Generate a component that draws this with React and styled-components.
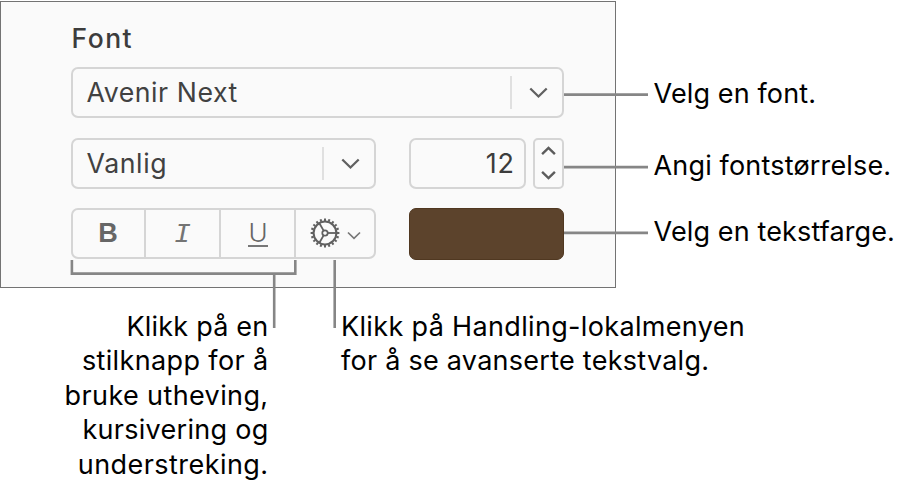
import React from 'react';
import styled, { createGlobalStyle } from 'styled-components';

const App = () => {
    return(
        <Page>
            <GlobalStyle />
            <TopRow>
                <Panel>
                    <Heading>Font</Heading>
                    <Combo>
                        <ComboText $spacing={0.55}>Avenir Next</ComboText>
                        <Arrow><Chevron /></Arrow>
                    </Combo>
                    <ControlRow>
                        <Combo $width={305}>
                            <ComboText $spacing={0.6}>Vanlig</ComboText>
                            <Arrow><Chevron /></Arrow>
                        </Combo>
                        <SizeGroup>
                            <SizeField>12</SizeField>
                            <Stepper>
                                <StepIcon viewBox="0 0 15 10"><path d="M1.1 8.2 L7.5 2 L13.9 8.2" /></StepIcon>
                                <StepIcon viewBox="0 0 15 10"><path d="M1.1 1.8 L7.5 8 L13.9 1.8" /></StepIcon>
                            </Stepper>
                        </SizeGroup>
                    </ControlRow>
                    <ControlRow>
                        <StyleGroup>
                            <StyleButton><BoldMark>B</BoldMark></StyleButton>
                            <StyleButton><ItalicMark>I</ItalicMark></StyleButton>
                            <StyleButton><UnderlineMark>U</UnderlineMark></StyleButton>
                            <ActionButton>
                                <Gear />
                                <SmallArrow viewBox="0 0 14 9"><path d="M1 1.5 L7 7.3 L13 1.5" /></SmallArrow>
                            </ActionButton>
                        </StyleGroup>
                        <ColorWell />
                    </ControlRow>
                </Panel>
                <Labels>
                    <Label $spacing={0.13}>Velg en font.</Label>
                    <Label $spacing={0.17}>Angi fontstørrelse.</Label>
                    <Label $spacing={0.13}>Velg en tekstfarge.</Label>
                </Labels>
            </TopRow>
            <BottomRow>
                <Caption $width={268.5} $align="right">
                    <Line $spacing={0.22}>Klikk på en</Line>
                    <Line $spacing={0.37}>stilknapp for å</Line>
                    <Line $spacing={0.38}>bruke utheving,</Line>
                    <Line $spacing={0.28}>kursivering og</Line>
                    <Line $spacing={0.44}>understreking.</Line>
                </Caption>
                <Caption $width={500} $align="left">
                    <Line $spacing={0.34}>Klikk på Handling-lokalmenyen</Line>
                    <Line $spacing={0.26}>for å se avanserte tekstvalg.</Line>
                </Caption>
            </BottomRow>
            <Callouts viewBox="0 0 915 489">
                <path d="M564 94.6H648" />
                <path d="M564 167.1H648" />
                <path d="M564 232.9H648" />
                <path d="M71.9 260V273.6H295.3V260" />
                <path d="M274.2 273.6V328" />
                <path d="M334.7 260V328" />
            </Callouts>
        </Page>
    );
}

const Chevron = () => (
    <ChevronIcon viewBox="0 0 19 12">
        <path d="M1.3 1.5 L9.5 9.5 L17.7 1.5" />
    </ChevronIcon>
);

// ring with short teeth, small hub and three spokes
const Gear = () => {
    const teeth = [];
    for(let i = 0; i < 20; i++){
        teeth.push(i * 18);
    }
    return(
        <GearIcon viewBox="-15 -15 30 30">
            <circle r="11.4" strokeWidth="2" />
            <circle r="2.7" strokeWidth="1.8" />
            {teeth.map((a) => (
                <path key={a} d="M0 -12 V-14.4" strokeWidth="2" transform={`rotate(${a})`} />
            ))}
            {[90, 210, 330].map((a) => (
                <path key={a} d="M0 -3 V-11" strokeWidth="1.8" transform={`rotate(${a})`} />
            ))}
        </GearIcon>
    );
}

const GlobalStyle = createGlobalStyle`
    body {
        margin : 0;
        background-color : #ffffff;
        font-family : Inter, "Liberation Sans", sans-serif;
    }
    * {
        box-sizing : border-box;
    }
`;

const Page = styled.div`
    position : relative;
    width : 915px;
    height : 489px;
    overflow : hidden;
    padding-top : 1px;
`;

const TopRow = styled.div`
    display : flex;
`;

const Panel = styled.div`
    width : 616px;
    height : 287px;
    padding : 18px 51px 0 70px;
    border : 1px solid #737373;
    background-color : #fafafa;
`;

const Heading = styled.div`
    height : 47px;
    padding-left : 0.5px;
    line-height : 37px;
    font-size : 26.5px;
    font-weight : 500;
    letter-spacing : 1.5px;
    color : #3c3c3c;
`;

const ControlRow = styled.div`
    display : flex;
    justify-content : space-between;
    margin-top : 20px;

    & + & {
        margin-top : 19px;
    }
`;

const Combo = styled.div`
    display : flex;
    align-items : center;
    width : ${(props) => props.$width ? `${props.$width}px` : '100%'};
    height : 51px;
    border : 2px solid #d5d5d5;
    border-radius : 7px;
`;

const ComboText = styled.div`
    flex : 1;
    padding-left : 13.5px;
    font-size : 26.7px;
    line-height : 47px;
    letter-spacing : ${(props) => props.$spacing}px;
    color : #414141;
`;

const Arrow = styled.div`
    display : flex;
    align-items : center;
    width : 52px;
    height : 33px;
    padding-left : 17px;
    border-left : 2px solid #e0e0e0;
`;

const ChevronIcon = styled.svg`
    width : 19px;
    height : 12px;
    margin-top : 1px;
    fill : none;
    stroke : #606060;
    stroke-width : 2.3;
`;

const SizeGroup = styled.div`
    display : flex;
    justify-content : space-between;
    width : 155px;
`;

const SizeField = styled.div`
    width : 117px;
    height : 51px;
    padding-right : 9.5px;
    border : 2px solid #d5d5d5;
    border-radius : 7px;
    font-size : 27px;
    line-height : 47px;
    text-align : right;
    letter-spacing : 0.6px;
    color : #3c3c3c;
`;

const Stepper = styled.div`
    display : flex;
    flex-direction : column;
    align-items : center;
    justify-content : space-between;
    width : 31px;
    height : 51px;
    padding : 6px 0 7px;
    border : 2px solid #d5d5d5;
    border-radius : 5px;
`;

const StepIcon = styled.svg`
    width : 15px;
    height : 10px;
    fill : none;
    stroke : #5c5c5c;
    stroke-width : 2.4;
`;

const StyleGroup = styled.div`
    display : flex;
    width : 305px;
    height : 51px;
    border : 2px solid #d5d5d5;
    border-radius : 7px;
`;

const StyleButton = styled.div`
    display : flex;
    align-items : flex-start;
    justify-content : center;
    width : 75px;
    border-right : 2px solid #d5d5d5;
    color : #666666;

    &:first-child {
        width : 73px;
    }
`;

const BoldMark = styled.span`
    font-family : "Liberation Sans", sans-serif;
    font-size : 27px;
    font-weight : 700;
    line-height : 47px;
    margin-right : 1px;
`;

const ItalicMark = styled.span`
    font-family : "Liberation Mono", monospace;
    font-size : 28px;
    font-style : italic;
    line-height : 49px;
    color : #747474;
`;

const UnderlineMark = styled.span`
    height : 26px;
    margin : 11px 0 0 1px;
    border-bottom : 2px solid #777777;
    font-size : 26px;
    font-weight : 300;
    line-height : 24px;
`;

const ActionButton = styled.div`
    display : flex;
    flex : 1;
    align-items : center;
    padding : 0 0 1px 14px;
`;

const GearIcon = styled.svg`
    width : 30px;
    height : 30px;
    fill : none;
    stroke : #606060;
`;

const SmallArrow = styled.svg`
    width : 14px;
    height : 9px;
    margin : 4px 0 0 7px;
    fill : none;
    stroke : #777777;
    stroke-width : 1.7;
`;

const ColorWell = styled.div`
    width : 155px;
    height : 52px;
    border : 1px solid #503821;
    border-radius : 7px;
    background-color : #5c432c;
`;

const Labels = styled.div`
    padding-left : 37.5px;
`;

const Label = styled.div`
    font-size : 27px;
    line-height : 34px;
    letter-spacing : ${(props) => props.$spacing}px;
    white-space : nowrap;
    color : #000000;

    &:nth-child(1) {
        margin-top : 76px;
    }
    &:nth-child(2) {
        margin-top : 38px;
    }
    &:nth-child(3) {
        margin-top : 32px;
    }
`;

const BottomRow = styled.div`
    display : flex;
    gap : 72.5px;
    padding-top : 22px;
`;

const Caption = styled.div`
    flex-shrink : 0;
    width : ${(props) => props.$width}px;
    text-align : ${(props) => props.$align};
    color : #000000;
`;

const Line = styled.div`
    font-size : 27px;
    line-height : 34.4px;
    letter-spacing : ${(props) => props.$spacing}px;
    white-space : nowrap;
`;

// leader lines lie over the panel and the captions
const Callouts = styled.svg`
    position : absolute;
    left : 0;
    top : 0;
    width : 915px;
    height : 489px;
    fill : none;
    stroke : #868686;
    stroke-width : 2.6;
    pointer-events : none;
`;

export default App;
